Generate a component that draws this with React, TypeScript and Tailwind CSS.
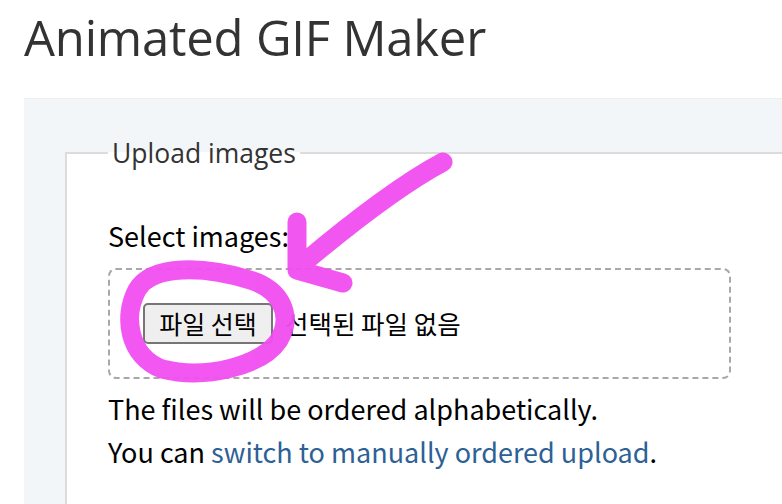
import React from "react";

export default function App() {
  return (
    <div className="relative w-[782px] h-[504px] overflow-hidden bg-white">
      <h1 className="pl-[24px] pt-[6px] text-[49px] leading-[62px] text-[#333] font-['Open_Sans','Noto_Sans',sans-serif] tracking-[-0.2px]">
        Animated GIF Maker
      </h1>
      <div className="ml-[24px] mt-[30px] h-[420px] bg-[#f3f6f8] border-t border-[#eceef0] pt-[36px] pl-[41px]">
        <fieldset className="h-[400px] bg-white border-2 border-[#dcdcdc] border-r-0 pl-[41px] pr-0 mr-[-10px]">
          <legend className="px-[4px] text-[26.5px] leading-[36px] text-[#333] font-['Open_Sans','Noto_Sans',sans-serif]">
            Upload images
          </legend>
          <div className="font-['Noto_Sans_CJK_KR','Noto_Sans',sans-serif] text-[27px] text-black">
            <div className="mt-[45px] leading-[40px]">Select images:</div>
            <div className="mt-[12px] w-[623px] h-[111px] border-2 border-dashed border-[#a8a8a8] rounded-[8px] px-[33px] flex items-center gap-[12px]">
              <button className="h-[41px] w-[130px] bg-[#efefef] border-2 border-[#767676] rounded-[5px] text-[25px] leading-none text-black">
                파일 선택
              </button>
              <span className="text-[25.5px]">선택된 파일 없음</span>
            </div>
            <div className="mt-[8px] leading-[43px]">The files will be ordered alphabetically.</div>
            <div className="leading-[43px]">
              You can <span className="text-[#2d6195]">switch to manually ordered upload</span>.
            </div>
          </div>
        </fieldset>
      </div>
      <svg className="absolute left-0 top-0 pointer-events-none" width="782" height="504" viewBox="0 0 782 504">
        <g fill="none" stroke="#f14ef0" strokeWidth="19" strokeLinecap="round" strokeLinejoin="round" opacity="0.95">
          <path d="M443 162 C 400 185, 345 228, 300 266" />
          <path d="M297 222 L 297 270 L 343 283" />
          <path d="M250 280 C 205 266, 152 264, 137 290 C 123 316, 128 356, 162 369 C 205 380, 262 366, 279 340 C 293 316, 282 290, 250 280 Z" />
        </g>
      </svg>
    </div>
  );
}
